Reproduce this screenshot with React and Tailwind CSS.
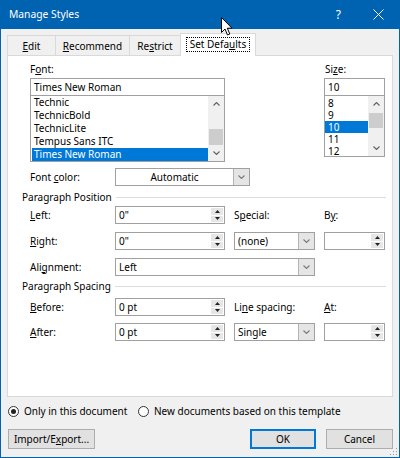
import { useState } from "react";

function Chev({ up = false, className = "" }) {
  return (
    <svg width="7" height="4" viewBox="0 0 7 4" className={className}>
      <path
        d={up ? "M0.5 3.5 L3.5 0.5 L6.5 3.5" : "M0.5 0.5 L3.5 3.5 L6.5 0.5"}
        fill="none"
        stroke="currentColor"
        strokeWidth="1.1"
      />
    </svg>
  );
}

function Tri({ up = false }) {
  return (
    <svg width="5" height="3" viewBox="0 0 5 3">
      <path d={up ? "M0 3 L2.5 0 L5 3 Z" : "M0 0 L2.5 3 L5 0 Z"} fill="#222" />
    </svg>
  );
}

function Scrollbar({ thumb }) {
  // thumb: [offset, height] inside the track
  return (
    <div className="flex w-[16px] flex-col bg-[#f0f0f0] text-[#606060]">
      <div className="flex h-[16px] items-center justify-center">
        <Chev up />
      </div>
      <div className="flex-1 px-px">
        <div style={{ height: thumb[0] }} />
        <div className="bg-[#cdcdcd]" style={{ height: thumb[1] }} />
      </div>
      <div className="flex h-[16px] items-center justify-center">
        <Chev />
      </div>
    </div>
  );
}

function SpinBox({ value = "", className = "" }) {
  return (
    <div className={`flex h-[18px] border border-[#a0a0a0] bg-white ${className}`}>
      <div className="flex-1 pl-[3px] leading-[16px]">{value}</div>
      <div className="flex w-[14px] flex-col gap-px bg-white p-px">
        <div className="flex flex-1 items-center justify-center bg-[#e6e6e6]">
          <Tri up />
        </div>
        <div className="flex flex-1 items-center justify-center bg-[#e6e6e6]">
          <Tri />
        </div>
      </div>
    </div>
  );
}

function Combo({ value, center = false, className = "" }) {
  return (
    <div className={`flex h-[18px] border border-[#a0a0a0] bg-white ${className}`}>
      <div className={`flex-1 leading-[16px] ${center ? "text-center" : "pl-[3px]"}`}>{value}</div>
      <div className="flex w-[16px] items-center justify-center border-l border-[#b4b4b4] bg-[#e5e5e5] text-[#7a7a7a]">
        <Chev />
      </div>
    </div>
  );
}

function Section({ title }) {
  return (
    <div className="flex h-[14px] items-center gap-[4px] pl-[14px] pr-[6px]">
      <span>{title}</span>
      <div className="h-px flex-1 bg-[#dcdcdc]" />
    </div>
  );
}

function Radio({ checked, label }) {
  return (
    <div className="flex items-center">
      <div className="flex h-[11px] w-[11px] items-center justify-center rounded-full border border-[#333] bg-white">
        {checked && <div className="h-[5px] w-[5px] rounded-full bg-[#222]" />}
      </div>
      <span className="ml-[5px]">{label}</span>
    </div>
  );
}

const fonts = ["Technic", "TechnicBold", "TechnicLite", "Tempus Sans ITC", "Times New Roman"];
const sizes = ["8", "9", "10", "11", "12"];

export default function App() {
  const [font] = useState("Times New Roman");
  const [size] = useState("10");
  const [onlyDoc, setOnlyDoc] = useState(true);

  return (
    <div className="relative flex h-[458px] w-[400px] flex-col overflow-hidden border-x border-b border-[#0063b1] bg-[#f0f0f0] font-['Noto_Sans',sans-serif] text-[10px] leading-[13px] text-black">
      {/* title bar */}
      <div className="-mx-px flex h-[29px] items-center bg-[#0063b1] pl-[9px] text-[10.3px] text-white">
        <span>Manage Styles</span>
        <span className="ml-auto mr-[32px] text-[12px]">?</span>
        <svg width="11" height="11" viewBox="0 0 11 11" className="mr-[16px]">
          <path d="M0.5 0.5 L10.5 10.5 M10.5 0.5 L0.5 10.5" stroke="white" strokeWidth="1" />
        </svg>
      </div>

      <div className="flex flex-1 flex-col px-[6px]">
        {/* tabs */}
        <div className="flex h-[26px] items-end">
          <div className="flex h-[20px] w-[48px] items-center justify-center border-l border-t border-[#d9d9d9] pt-px">
            <span><u>E</u>dit</span>
          </div>
          <div className="flex h-[20px] w-[74px] items-center justify-center border-l border-t border-[#d9d9d9] pt-px">
            <span><u>R</u>ecommend</span>
          </div>
          <div className="flex h-[20px] w-[51px] items-center justify-center border-l border-t border-[#d9d9d9] pt-px">
            <span>Re<u>s</u>trict</span>
          </div>
          <div className="relative z-10 -mb-px flex h-[23px] w-[76px] items-start justify-center border-x border-t border-[#d9d9d9] bg-white pt-[3px]">
            <span className="border border-dotted border-black px-[3px] leading-[13px]">Set Defa<u>u</u>lts</span>
          </div>
        </div>

        {/* panel */}
        <div className="flex h-[342px] flex-col border border-[#d9d9d9] bg-white">
          <div className="flex pl-[22px] pt-[7px]">
            <div className="w-[195px]">
              <div className="h-[15px]">F<u>o</u>nt:</div>
              <div className="h-[18px] border border-[#a0a0a0] pl-[3px] leading-[16px]">{font}</div>
              <div className="flex h-[66px] border-x border-b border-[#a0a0a0]">
                <div className="flex-1 pl-px">
                  {fonts.map((f) => (
                    <div
                      key={f}
                      className={`h-[13px] pl-[2px] leading-[13px] ${f === font ? "bg-[#0078d7] text-white" : ""}`}
                    >
                      {f}
                    </div>
                  ))}
                </div>
                <Scrollbar thumb={[17, 16]} />
              </div>
            </div>
            <div className="ml-[99px] w-[61px]">
              <div className="h-[15px] pl-px">Si<u>z</u>e:</div>
              <div className="h-[18px] border border-[#a0a0a0] pl-[3px] leading-[16px]">{size}</div>
              <div className="flex h-[61px] border-x border-b border-[#a0a0a0]">
                <div className="flex-1 pt-px">
                  {sizes.map((s) => (
                    <div
                      key={s}
                      className={`h-[12px] overflow-hidden pl-[3px] leading-[12px] ${s === size ? "bg-[#0078d7] text-white" : ""}`}
                    >
                      {s}
                    </div>
                  ))}
                </div>
                <Scrollbar thumb={[1, 15]} />
              </div>
            </div>
          </div>

          <div className="mt-[6px] flex h-[18px] items-center pl-[22px]">
            <div className="w-[85px]">Font <u>c</u>olor:</div>
            <Combo value="Automatic" center className="w-[135px]" />
          </div>

          <div className="mt-[4px]">
            <Section title="Paragraph Position" />
          </div>

          <div className="mt-[2px] flex h-[18px] items-center pl-[22px]">
            <div className="w-[85px]"><u>L</u>eft:</div>
            <SpinBox value={'0"'} className="w-[110px]" />
            <div className="ml-[9px] w-[81px]">S<u>p</u>ecial:</div>
            <div className="ml-[9px]">B<u>y</u>:</div>
          </div>

          <div className="mt-[8px] flex h-[18px] items-center pl-[22px]">
            <div className="w-[85px]"><u>R</u>ight:</div>
            <SpinBox value={'0"'} className="w-[110px]" />
            <Combo value="(none)" className="ml-[9px] w-[81px]" />
            <SpinBox className="ml-[9px] w-[61px]" />
          </div>

          <div className="mt-[8px] flex h-[18px] items-center pl-[22px]">
            <div className="w-[85px]">Ali<u>g</u>nment:</div>
            <Combo value="Left" className="w-[200px]" />
          </div>

          <div className="mt-[3px]">
            <Section title="Paragraph Spacing" />
          </div>

          <div className="mt-[5px] flex h-[18px] items-center pl-[22px]">
            <div className="w-[85px]"><u>B</u>efore:</div>
            <SpinBox value="0 pt" className="w-[110px]" />
            <div className="ml-[9px] w-[81px]">Li<u>n</u>e spacing:</div>
            <div className="ml-[9px]"><u>A</u>t:</div>
          </div>

          <div className="mt-[7px] flex h-[18px] items-center pl-[22px]">
            <div className="w-[85px]"><u>A</u>fter:</div>
            <SpinBox value="0 pt" className="w-[110px]" />
            <Combo value="Single" className="ml-[9px] w-[81px]" />
            <SpinBox className="ml-[9px] w-[61px]" />
          </div>
        </div>

        {/* radios */}
        <div className="mt-[7px] flex h-[14px] items-center pl-px">
          <div className="w-[130px] cursor-default" onClick={() => setOnlyDoc(true)}>
            <Radio checked={onlyDoc} label="Only in this document" />
          </div>
          <div className="cursor-default" onClick={() => setOnlyDoc(false)}>
            <Radio checked={!onlyDoc} label="New documents based on this template" />
          </div>
        </div>

        {/* buttons */}
        <div className="mt-[11px] flex h-[20px] pl-px">
          <button className="h-[20px] w-[87px] border border-[#adadad] bg-[#e1e1e1] leading-[18px]">
            Import/E<u>x</u>port...
          </button>
          <button className="ml-auto h-[20px] w-[66px] border-2 border-[#0078d7] bg-[#e1e1e1] leading-[16px]">
            OK
          </button>
          <button className="ml-[10px] h-[20px] w-[67px] border border-[#adadad] bg-[#e1e1e1] leading-[18px]">
            Cancel
          </button>
        </div>
      </div>

      {/* resize grip */}
      <svg width="10" height="10" viewBox="0 0 10 10" className="absolute bottom-[1px] right-[1px]">
        {[
          [8, 2], [8, 5], [5, 5], [8, 8], [5, 8], [2, 8],
        ].map(([x, y]) => (
          <rect key={`${x}-${y}`} x={x} y={y} width="1" height="1" fill="#9a9a9a" />
        ))}
      </svg>

      {/* mouse pointer */}
      <svg width="13" height="20" viewBox="0 0 13 20" className="absolute left-[220px] top-[17px] z-20">
        <path
          d="M0.5 0.5 L0.5 15.5 L4 12 L6.5 18 L8.8 17 L6.3 11.2 L11 11.2 Z"
          fill="white"
          stroke="black"
          strokeWidth="1"
          strokeLinejoin="round"
        />
      </svg>
    </div>
  );
}
